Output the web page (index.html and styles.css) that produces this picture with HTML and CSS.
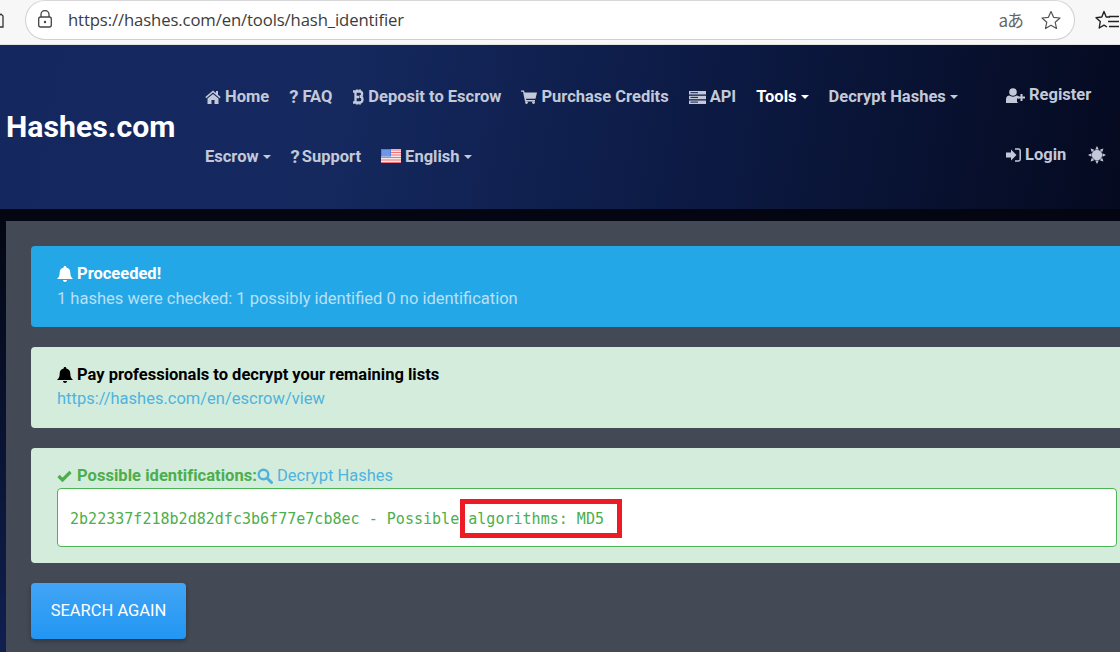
FILE: index.html
```html
<!DOCTYPE html>
<html lang="en">
<head>
<meta charset="utf-8">
<title>Hash Identifier</title>
<link rel="stylesheet" href="styles.css">
</head>
<body>
<div class="browser">
  <svg class="home-stub" viewBox="0 0 4 18" width="4" height="18"><path d="M-4 7 1 3 3 5V16H-4" fill="none" stroke="#333" stroke-width="1.3"/></svg>
  <div class="address">
    <svg class="lock" viewBox="0 0 16 18" width="16" height="18"><path d="M4 7V4.500a4 4 0 0 1 8 0V7" fill="none" stroke="#444" stroke-width="1.300"/><rect x="1.700" y="7" width="12.600" height="10" rx="2" fill="none" stroke="#444" stroke-width="1.300"/><circle cx="8" cy="12" r="1.200" fill="#444"/></svg>
    <span class="url">https://hashes.com/en/tools/hash_identifier</span>
    <span class="translate">aあ</span>
    <svg class="star" viewBox="0 0 20 20" width="20" height="20"><path d="M10 1.500 12.600 7.300 19 8 14.200 12.200 15.500 18.500 10 15.300 4.500 18.500 5.800 12.200 1 8 7.400 7.300Z" fill="none" stroke="#555" stroke-width="1.200" stroke-linejoin="round"/></svg>
  </div>
  <svg class="fav" viewBox="0 0 24 21" width="24" height="21"><path d="M15 7 11.200 7 9 1.500 6.800 7 1 7.700 5.300 11.500 4.200 18 9 15.200 12 17" fill="none" stroke="#222" stroke-width="1.400" stroke-linejoin="round"/><path d="M14 6.500H24M13 11.500H24M14 16.500H24" stroke="#222" stroke-width="1.400"/></svg>
</div>

<header class="site-header">
  <a class="brand">Hashes.com</a>
  <nav class="nav">
    <div class="nav-row">
      <a class="nav-link"><svg class="ico" viewBox="0 0 16 14" width="16" height="14"><path d="M8 0.500 0.300 7 1.300 8.200 8 2.600 14.700 8.200 15.700 7 13 4.700V1H11V3L8 .5Z M2.500 8.600V14H6.500V10H9.500V14H13.500V8.600L8 4Z" fill="currentColor"/></svg>Home</a>
      <a class="nav-link"><span class="q-ico">?</span>FAQ</a>
      <a class="nav-link"><svg class="ico" viewBox="0 0 12 16" width="12" height="16"><path d="M1 2.500H7.500C11 2.500 11 7.500 7.500 7.500 11.500 7.500 11.500 13.500 7.500 13.500H1M3.500 2.500V13.500M3.500 8H7M5 .5V2.500M7.800 .5V2.500M5 13.500V15.500M7.800 13.500V15.500" fill="none" stroke="currentColor" stroke-width="2.300"/></svg>Deposit to Escrow</a>
      <a class="nav-link"><svg class="ico" viewBox="0 0 16 14" width="16" height="14"><path d="M0 .5H3L3.600 2.500H16L14.500 8.800H5L5.300 10H14V11.500H4L2 1.800H0Z" fill="currentColor"/><circle cx="5.500" cy="12.600" r="1.400" fill="currentColor"/><circle cx="12.500" cy="12.600" r="1.400" fill="currentColor"/></svg>Purchase Credits</a>
      <a class="nav-link"><svg class="ico ico-api" viewBox="0 0 17 13" width="17" height="13"><path d="M0 0H17V3.500H0ZM0 4.700H17V8.200H0ZM0 9.400H17V13H0Z" fill="currentColor"/><path d="M1.500 1.700H9M1.500 6.400H9M1.500 11.100H9" stroke="#10204c" stroke-width="1"/></svg>API</a>
      <a class="nav-link is-active">Tools<i class="caret"></i></a>
      <a class="nav-link">Decrypt Hashes<i class="caret"></i></a>
    </div>
    <div class="nav-row">
      <a class="nav-link">Escrow<i class="caret"></i></a>
      <a class="nav-link"><span class="q-tight">?</span>Support</a>
      <a class="nav-link"><svg class="flag" viewBox="0 0 20 14" width="20" height="14"><rect width="20" height="14" fill="#f6e6e6"/><path d="M0 1H20M0 3.500H20M0 6H20M0 8.500H20M0 11H20M0 13.500H20" stroke="#ee7278" stroke-width="1.200"/><rect width="10" height="7.500" fill="#4f80e2"/><path d="M1.500 2H9M1.500 4H9M1.500 6H9" stroke="#c8dafa" stroke-width="1" stroke-dasharray="1 1"/></svg>English<i class="caret"></i></a>
    </div>
  </nav>
  <div class="side">
    <a class="nav-link side-link"><svg class="ico" viewBox="0 0 19 15" width="19" height="15"><circle cx="7" cy="4" r="3.800" fill="currentColor"/><path d="M0 15V11C0 8.500 2 7.500 3.500 7.500 5 9 9 9 10.500 7.500 11.500 7.500 12.500 8 13 9V10.500H11V14L12.500 15Z" fill="currentColor"/><path d="M15.500 6V13M12 9.500H19" stroke="currentColor" stroke-width="2"/></svg>Register</a>
    <div class="side-row">
      <a class="nav-link side-link"><svg class="ico ico-login" viewBox="0 0 15 14" width="15" height="14"><path d="M0 4.500H5V1.500L10.500 7 5 12.500V9.500H0Z" fill="currentColor"/><path d="M9 1H12.500C13.500 1 14.200 1.700 14.200 2.700V11.300C14.200 12.300 13.500 13 12.500 13H9" fill="none" stroke="currentColor" stroke-width="1.500"/></svg>Login</a>
      <svg class="sun" viewBox="0 0 18 18" width="18" height="18"><circle cx="9" cy="9" r="5.200" fill="currentColor"/><path d="M9 0 10.800 3.500H7.200ZM9 18 10.800 14.500H7.200ZM0 9 3.500 7.200V10.800ZM18 9 14.500 7.200V10.800ZM2.600 2.600 6.300 3.800 3.800 6.300ZM15.400 2.600 14.200 6.300 11.700 3.800ZM2.600 15.400 3.800 11.700 6.300 14.200ZM15.400 15.400 11.700 14.200 14.200 11.700Z" fill="currentColor"/></svg>
    </div>
  </div>
</header>

<div class="page">
  <main class="panel">
    <section class="alert alert-info">
      <div class="alert-title"><svg class="bell" viewBox="0 0 16 16" width="16" height="16"><path d="M8 0C9 0 9.400 .6 9.300 1.400 12 2 13.300 4 13.300 6.500 13.300 10 14.300 11.500 16 13H0C1.700 11.500 2.700 10 2.700 6.500 2.700 4 4 2 6.700 1.400 6.600 .6 7 0 8 0ZM6 14H10C10 15.300 9 16 8 16S6 15.300 6 14Z" fill="currentColor"/></svg>Proceeded!</div>
      <div class="alert-text">1 hashes were checked: 1 possibly identified 0 no identification</div>
    </section>
    <section class="alert alert-success">
      <div class="alert-title"><svg class="bell" viewBox="0 0 16 16" width="16" height="16"><path d="M8 0C9 0 9.400 .6 9.300 1.400 12 2 13.300 4 13.300 6.500 13.300 10 14.300 11.500 16 13H0C1.700 11.500 2.700 10 2.700 6.500 2.700 4 4 2 6.700 1.400 6.600 .6 7 0 8 0ZM6 14H10C10 15.300 9 16 8 16S6 15.300 6 14Z" fill="currentColor"/></svg>Pay professionals to decrypt your remaining lists</div>
      <a class="alert-link">https://hashes.com/en/escrow/view</a>
    </section>
    <section class="alert alert-result">
      <div class="result-head"><svg class="check" viewBox="0 0 15 12" width="15" height="12"><path d="M1.500 6 5.500 10 13.500 2" fill="none" stroke="currentColor" stroke-width="3.200"/></svg><strong class="result-label">Possible identifications:</strong><a class="alert-link"><svg class="search" viewBox="0 0 16 16" width="16" height="16"><circle cx="6.500" cy="6.500" r="4.800" fill="none" stroke="currentColor" stroke-width="2.400"/><path d="M10 10 14.500 14.500" stroke="currentColor" stroke-width="3" stroke-linecap="round"/></svg>Decrypt Hashes</a></div>
      <div class="result-box">
        <pre class="result-text">2b22337f218b2d82dfc3b6f77e7cb8ec - Possible algorithms: MD5</pre>
        <div class="highlight"></div>
      </div>
    </section>
    <a class="btn">SEARCH AGAIN</a>
  </main>
</div>
</body>
</html>
```
FILE: styles.css
```css
* { box-sizing: border-box; }
html, body { margin: 0; height: 652px; overflow: hidden; }
body { font-family: Roboto, "Liberation Sans", sans-serif; font-size: 16.5px; line-height: 24px; background: #030611; }

.browser { height: 45px; background: #f7f7f7; border-bottom: 1px solid #e3e3e3; display: flex; align-items: flex-start; position: relative; }
.home-stub { margin-top: 11px; flex: none; }
.address { margin: 0 0 0 21px; width: 1050px; height: 40px; background: #fff; border: 1.5px solid #d0d0d0; border-top-color: #d8d8d8; border-radius: 20px; display: flex; align-items: center; padding-left: 11px; }
.lock { flex: none; margin-top: -2px; }
.url { margin-left: 15px; font-family: "Open Sans", sans-serif; font-size: 16.7px; letter-spacing: -.12px; color: #3c3c3c; white-space: nowrap; }
.translate { margin-left: auto; font-family: "Noto Sans CJK JP", "Noto Sans", sans-serif; font-size: 17px; color: #666; letter-spacing: -1px; }
.star { margin: 0 13px 0 18px; flex: none; }
.fav { margin: 10px 0 0 20px; flex: none; }

.site-header { height: 164px; display: flex; align-items: center; background: linear-gradient(100deg, #14285f 0%, #15295f 30%, #0c1a44 62%, #050a20 100%); }
.brand { margin-left: 6px; width: 199px; font-size: 30.2px; line-height: 36px; font-weight: 700; color: #fff; flex: none; white-space: nowrap; }
.nav { width: 801px; flex: none; }
.nav-row { height: 60px; display: flex; align-items: center; gap: 20px; }
.nav-link { display: inline-flex; align-items: center; font-weight: 700; font-size: 16.5px; color: #c3c9d8; white-space: nowrap; }
.nav-link.is-active { color: #fff; }
.ico { margin-right: 4px; flex: none; }
.q-ico { margin: 0 4px 0 0; font-size: 18.5px; }
.q-tight { margin: 0 2px 0 0; font-size: 18.5px; }
.flag { margin-right: 4px; flex: none; margin-top: -2px; }
.caret { display: inline-block; margin-left: 4px; width: 0; height: 0; border: 4px solid transparent; border-top-color: currentColor; border-bottom: 0; }

.side { display: flex; flex-direction: column; margin-top: -4px; flex: none; }
.side-link { height: 24px; }
.side > .side-link { margin-bottom: 36px; }
.side-row { display: flex; align-items: center; gap: 23px; height: 24px; color: #c3c9d8; }
.sun { flex: none; margin-left: -1px; }

.page { height: 443px; padding: 12px 0 0 6px; background: linear-gradient(180deg, #030611 0%, #0f2050 100%); }
.panel { width: 1162px; height: 431px; padding: 25px; background: #434a55; display: flex; flex-direction: column; align-items: flex-start; }

.alert { flex: none; width: 1112px; border-radius: 4px; padding: 16px 26px 0; margin-bottom: 20px; }
.alert-info { background: #24a7e6; color: #fff; height: 81px; }
.alert-text { color: #b9e0f6; margin-top: 1px; }
.alert-success { background: #d4ecdc; color: #000; height: 81px; }
.alert-title { font-weight: 700; display: flex; align-items: center; }
.bell { margin-right: 4px; flex: none; }
.alert-link { color: #4fb3dd; display: inline-flex; align-items: center; }

.alert-result { background: #d4ecdc; height: 115px; padding-top: 15px; }
.result-head { color: #4cae4c; display: flex; align-items: center; height: 24px; padding-top: 1px; }
.result-label { letter-spacing: .04px; }
.check { margin-right: 5px; flex: none; }
.search { margin-right: 4px; flex: none; }
.result-box { position: relative; margin-top: 1px; width: 1060px; height: 59px; background: #fff; border: 1px solid #4cb553; border-radius: 4px; display: flex; align-items: center; padding: 2px 0 0 12px; }
.result-text { margin: 0; font-family: "DejaVu Sans Mono", monospace; font-size: 15px; letter-spacing: .02px; line-height: 20px; color: #4cae4c; }
.highlight { position: absolute; left: 402px; top: 10px; width: 162px; height: 39px; border: 5px solid #ed1c24; }

.btn { flex: none; width: 155px; height: 56px; border-radius: 4px; background: linear-gradient(180deg, #42a5f5, #2196f3); color: #fff; font-size: 16.5px; display: flex; align-items: center; justify-content: center; box-shadow: 0 2px 4px rgba(0,0,0,.3); }
```
